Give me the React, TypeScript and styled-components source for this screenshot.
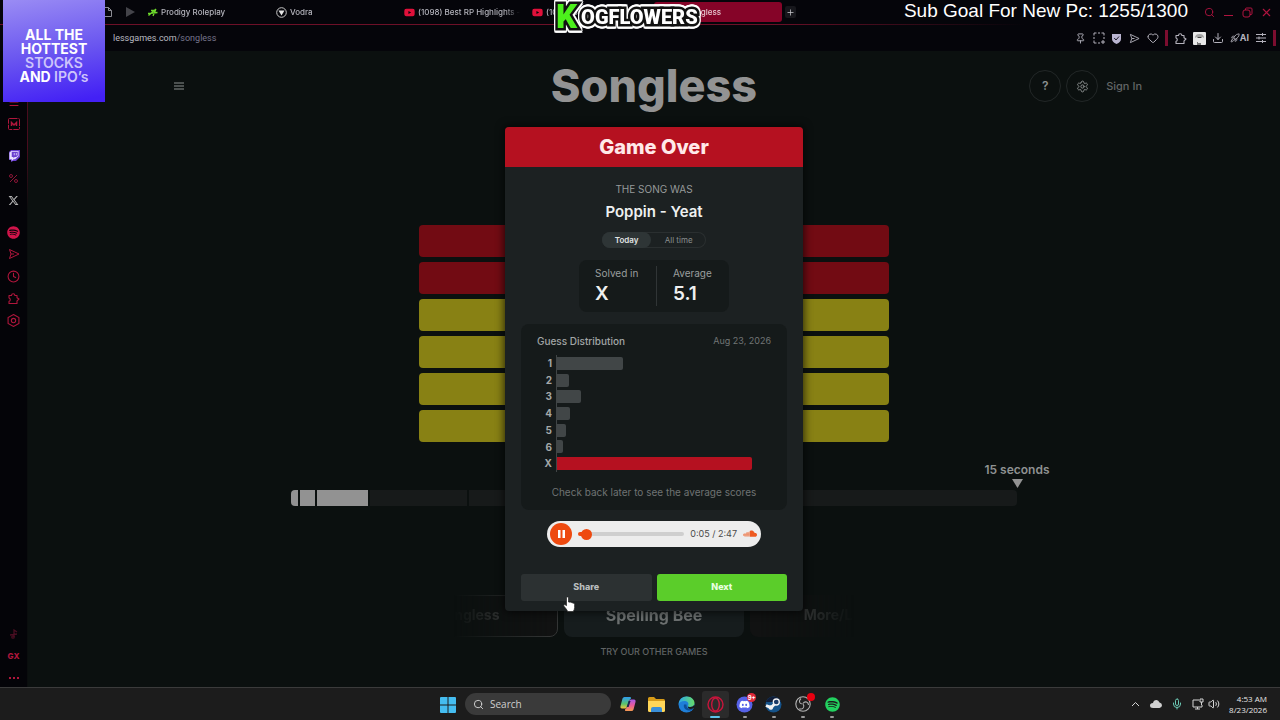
import React from "react";
import styled, { createGlobalStyle, css } from "styled-components";
import {
  Clock, Download, Heart, Menu, Mic, Pin, Plus, Rocket, Search,
  Settings, Volume2, X,
} from "lucide-react";
import { FaDiscord, FaSoundcloud, FaSpotify, FaTwitch, FaXTwitter, FaYoutube } from "react-icons/fa6";

const display = `Inter, "Liberation Sans", sans-serif`;
const RED = "#b51120";

const Global = createGlobalStyle`
  *, *::before, *::after { box-sizing: border-box; }
  body { margin: 0; background: #0b100f; font-family: ${display}; color: #d8dada; }
  button, input { font-family: inherit; }
  button { border: 0; padding: 0; background: none; color: inherit; cursor: pointer; }
  h1, h2, p { margin: 0; }
  a { color: inherit; text-decoration: none; }
  svg { display: block; flex: none; }
`;

const Page = styled.div`
  position: relative;
  display: flex;
  flex-direction: column;
  min-height: 100vh;
  overflow: hidden;
`;

/* ---------- browser chrome ---------- */

const TabBar = styled.div`
  display: flex;
  align-items: center;
  height: 25px;
  padding-left: 102px;
  background: #05050a;
  border-bottom: 1px solid;
  border-image: linear-gradient(90deg, #6d1028 0 60%, #05050a 80%) 1;
`;

const PinnedTabs = styled.div`
  display: flex;
  align-items: center;
  gap: 14px;
  width: 40px;
  color: #8c8c94;
`;

const Tab = styled.button<{ $active?: boolean }>`
  display: flex;
  align-items: center;
  gap: 3px;
  width: 128px;
  height: 20px;
  padding: 0 6px;
  overflow: hidden;
  border-radius: 3px;
  font-size: 8px;
  line-height: 12px;
  font-weight: 500;
  white-space: nowrap;
  color: ${(p) => (p.$active ? "#e8c8d0" : "#b4b4bc")};
  background: ${(p) => (p.$active ? "#850428" : "transparent")};
  ${(p) => p.$active && css`padding-left: 32px;`}
`;

const TabTitle = styled.span`
  overflow: hidden;
  flex: 1;
  text-align: left;
  mask-image: linear-gradient(90deg, #000 85%, transparent);
`;

const NewTab = styled.button`
  display: grid;
  place-items: center;
  width: 11px;
  height: 12px;
  margin-left: 3px;
  border-radius: 2px;
  background: #17171c;
  color: #c8c8cc;
`;

const WindowButtons = styled.div`
  display: flex;
  align-items: center;
  gap: 7px;
  margin-left: auto;
  padding-right: 7px;
  color: #b0143f;
`;

const IconButton = styled.button`
  display: grid;
  place-items: center;
  min-width: 12px;
  height: 14px;
`;

const AddressBar = styled.div`
  display: flex;
  align-items: center;
  justify-content: space-between;
  height: 26px;
  padding: 0 4px 0 113px;
  background: #05050a;
`;

const Url = styled.a`
  font: 400 9px/14px Roboto, sans-serif;
  color: #b9b9c0;
  span { color: #77758c; }
`;

const Tools = styled.div`
  display: flex;
  align-items: center;
  gap: 6px;
  color: #b4b2bc;
`;

const Divider = styled.i`
  width: 3px;
  height: 16px;
  background: #7c0d2f;
`;

const AiButton = styled(IconButton)`
  display: flex;
  align-items: center;
  font-size: 9px;
  line-height: 12px;
  font-weight: 700;
`;

const Window = styled.div`
  display: flex;
  flex: 1;
`;

const Sidebar = styled.nav`
  display: flex;
  flex-direction: column;
  justify-content: space-between;
  width: 28px;
  padding-top: 42px;
  background: #040408;
  border-right: 1px solid;
  border-image: linear-gradient(180deg, #4a0c1e 0 15%, #0a0d0d 25%) 1;
  color: #b0163c;
`;

const SideGroups = styled.div`
  display: flex;
  flex-direction: column;
  gap: 14px;
`;

const SideGroup = styled.div`
  display: flex;
  flex-direction: column;
  gap: 4px;
`;

const SideButton = styled.button<{ $color?: string }>`
  display: grid;
  place-items: center;
  width: 27px;
  height: 18px;
  font-size: 8px;
  line-height: 10px;
  font-weight: 800;
  color: ${(p) => p.$color ?? "inherit"};
`;

/* ---------- game page ---------- */

const Content = styled.main`
  position: relative;
  display: flex;
  flex: 1;
  flex-direction: column;
  align-items: center;
  padding-bottom: 24px;
  background: #0b100f;
`;

const Header = styled.header`
  display: grid;
  grid-template-columns: 1fr auto 1fr;
  align-items: center;
  width: min(100%, 976px);
  height: 70px;
  color: #7c8080;
`;

const MenuButton = styled.button`
  justify-self: start;
  padding: 8px;
`;

const Title = styled.h1`
  font-size: 45px;
  line-height: 56px;
  font-weight: 800;
  color: #939393;
`;

const HeaderActions = styled.div`
  display: flex;
  align-items: center;
  justify-self: end;
  gap: 5px;
`;

const RoundButton = styled.button`
  display: grid;
  place-items: center;
  width: 32px;
  height: 32px;
  border: 1px solid #222727;
  border-radius: 50%;
  font-size: 12px;
  line-height: 16px;
  font-weight: 600;
  color: #8c9090;
`;

const SignIn = styled.a`
  margin-left: 3px;
  font-size: 11px;
  line-height: 16px;
  font-weight: 500;
  color: #626666;
`;

const Board = styled.div`
  display: grid;
  gap: 5px;
  width: min(100%, 470px);
  margin-top: 104px;
`;

const Guess = styled.div<{ $kind: "wrong" | "artist" }>`
  height: 32px;
  border-radius: 4px;
  background: ${(p) => (p.$kind === "wrong" ? "#720b13" : "#888114")};
`;

const Timeline = styled.div`
  width: min(100%, 726px);
  margin-top: 20px;
`;

const Marker = styled.div`
  display: flex;
  flex-direction: column;
  align-items: center;
  gap: 1px;
  width: 80px;
  margin: 0 -40px 2px auto;
  font-size: 12px;
  line-height: 16px;
  font-weight: 600;
  color: #8f9292;
`;

const Segments = styled.div`
  display: flex;
  gap: 2px;
  height: 16px;
  overflow: hidden;
  border-radius: 4px;
`;

const Segment = styled.i<{ $span: number; $played: boolean }>`
  flex: ${(p) => p.$span} 1 0;
  background: ${(p) => (p.$played ? "#929292" : "#171a1a")};
`;

const Games = styled.div`
  display: flex;
  justify-content: center;
  gap: 6px;
  width: min(100%, 400px);
  margin-top: 89px;
  overflow: hidden;
  mask-image: linear-gradient(90deg, transparent, #000 24%, #000 76%, transparent);
`;

const GameCard = styled.a<{ $tone: "outline" | "main" | "plain" }>`
  display: grid;
  flex: none;
  justify-content: center;
  width: 180px;
  height: 42px;
  padding-top: 9px;
  border-radius: 8px;
  font-weight: 700;
  font-size: ${(p) => (p.$tone === "main" ? 16 : 14)}px;
  line-height: 20px;
  color: ${(p) => (p.$tone === "main" ? "#6c7070" : "#505050")};
  background: ${(p) => (p.$tone === "main" ? "#161c1d" : "#111212")};
  border: 1px solid ${(p) => (p.$tone === "outline" ? "#333535" : "transparent")};
`;

const Caption = styled.p`
  margin-top: 8px;
  font-size: 9px;
  line-height: 13px;
  font-weight: 500;
  color: #606464;
`;

/* ---------- result dialog ---------- */

const Layer = styled.div`
  position: absolute;
  inset: 0;
  display: flex;
  align-items: flex-start;
  justify-content: center;
  padding-top: 76px;
`;

const Dialog = styled.section`
  width: 298px;
  overflow: hidden;
  border-radius: 4px;
  background: #1c2122;
  box-shadow: 0 0 8px 1px #000000b0;
`;

const DialogTitle = styled.h2`
  background: ${RED};
  color: #ffe9e9;
  font-size: 20px;
  line-height: 40px;
  font-weight: 800;
  text-align: center;
`;

const DialogBody = styled.div`
  display: flex;
  flex-direction: column;
  align-items: center;
  padding: 14px 16px 10px;
`;

const Eyebrow = styled.p`
  font-size: 10px;
  line-height: 16px;
  color: #969a9a;
`;

const Song = styled.p`
  margin: 5px 0 10px;
  font-size: 15px;
  line-height: 20px;
  font-weight: 600;
  color: #eef0f0;
`;

const Switch = styled.div`
  display: flex;
  width: 104px;
  height: 16px;
  border-radius: 8px;
  box-shadow: inset 0 0 0 1px #2a2f30;
`;

const SwitchOption = styled.button<{ $on?: boolean }>`
  flex: ${(p) => (p.$on ? 9 : 10)};
  border-radius: 8px;
  font-size: 8px;
  line-height: 16px;
  font-weight: ${(p) => (p.$on ? 600 : 400)};
  color: ${(p) => (p.$on ? "#e2e5e5" : "#8a8e8e")};
  background: ${(p) => (p.$on ? "#2e3536" : "transparent")};
`;

const Stats = styled.div`
  display: flex;
  margin-top: 12px;
  padding: 6px 0;
  border-radius: 8px;
  background: #151a1a;
`;

const Stat = styled.div`
  width: 77px;
  padding-left: 16px;
  font-size: 10px;
  line-height: 15px;
  color: #9a9e9e;
  & + & { width: 73px; border-left: 1px solid #303536; }
  strong {
    display: block;
    font-size: 19px;
    line-height: 25px;
    font-weight: 600;
    color: #eef0f0;
  }
`;

const Distribution = styled.div`
  width: 100%;
  margin-top: 12px;
  padding: 9px 16px 10px;
  border-radius: 8px;
  background: #151a1a;
`;

const DistHead = styled.div`
  display: flex;
  align-items: center;
  justify-content: space-between;
  margin-bottom: 6px;
  font-size: 10px;
  line-height: 16px;
  font-weight: 500;
  color: #a2a6a6;
  time { font-size: 9px; font-weight: 400; color: #717575; }
`;

const Chart = styled.div`
  display: flex;
  flex-direction: column;
  height: 117px;
`;

const ChartRow = styled.div`
  display: flex;
  flex: 1;
  align-items: stretch;
  font-size: 10px;
  line-height: 16px;
  font-weight: 700;
  color: #a4a8a8;
`;

const ChartLabel = styled.span`
  width: 20px;
  padding-right: 4px;
  text-align: right;
  border-right: 1px solid #404546;
`;

const Bar = styled.i<{ $hit?: boolean }>`
  align-self: center;
  height: 13px;
  border-radius: 0 2px 2px 0;
  background: ${(p) => (p.$hit ? RED : "#414647")};
`;

const DistNote = styled.p`
  margin-top: 12px;
  font-size: 10px;
  line-height: 16px;
  text-align: center;
  white-space: nowrap;
  color: #6f7373;
`;

const Player = styled.div`
  display: flex;
  align-items: center;
  gap: 6px;
  width: 214px;
  height: 26px;
  margin-top: 11px;
  padding: 0 4px 0 3px;
  border-radius: 13px;
  background: #ededed;
  font-size: 9px;
  line-height: 12px;
  color: #4a4a4a;
`;

const PauseButton = styled.button`
  display: grid;
  place-items: center;
  width: 22px;
  height: 22px;
  border-radius: 50%;
  background: #ee4a10;
`;

const Seek = styled.input`
  appearance: none;
  flex: 1;
  min-width: 0;
  height: 4px;
  margin: 0;
  border-radius: 2px;
  background: linear-gradient(90deg, #ee4a10 8%, #cfcfcf 8%);
  &::-webkit-slider-thumb {
    appearance: none;
    width: 11px;
    height: 11px;
    border-radius: 50%;
    background: #ee4a10;
  }
`;

const Actions = styled.div`
  display: flex;
  gap: 5px;
  width: 100%;
  margin-top: 27px;
`;

const ActionButton = styled.button<{ $primary?: boolean }>`
  flex: 1;
  height: 27px;
  padding-bottom: 1px;
  border-radius: 3px;
  font-size: 9px;
  line-height: 12px;
  font-weight: 800;
  color: ${(p) => (p.$primary ? "#e8ffe0" : "#b9bdbd")};
  background: ${(p) => (p.$primary ? "#5bcd2a" : "#2c3132")};
`;

/* ---------- taskbar ---------- */

const Taskbar = styled.footer`
  display: grid;
  grid-template-columns: 1fr auto 1fr;
  align-items: center;
  height: 33px;
  padding: 0 13px 0 19px;
  background: #1c1c1c;
  border-top: 1px solid #3b3b3b;
`;

const Dock = styled.div`
  display: flex;
  grid-column: 2;
  align-items: center;
`;

const SearchBox = styled.label`
  display: flex;
  align-items: center;
  gap: 6px;
  width: 146px;
  height: 22px;
  margin: 0 3px 0 9px;
  padding: 0 8px;
  border-radius: 11px;
  background: #3a3a3a;
  color: #d8d8d8;
  input {
    min-width: 0;
    flex: 1;
    padding: 0;
    border: 0;
    outline: 0;
    background: none;
    font: 400 10px/14px "Open Sans", sans-serif;
  }
  input::placeholder { color: #cfcfcf; }
`;

const Apps = styled.div`
  display: flex;
  justify-content: space-between;
  width: 232px;
`;

const AppButton = styled.button<{ $state?: "open" | "active" }>`
  position: relative;
  display: grid;
  place-items: center;
  width: 27px;
  height: 27px;
  border-radius: 3px;
  background: ${(p) => (p.$state === "active" ? "#2b2b2b" : "transparent")};
  ${(p) => p.$state && css`
    &::after {
      content: "";
      position: absolute;
      bottom: 0;
      width: ${p.$state === "active" ? 10 : 4}px;
      height: 2px;
      border-radius: 1px;
      background: ${p.$state === "active" ? "#5cc3ea" : "#9a9a9a"};
    }
  `}
`;

const Badge = styled.span`
  position: absolute;
  top: 2px;
  right: 2px;
  min-width: 9px;
  height: 9px;
  border-radius: 5px;
  background: #e0283a;
  font-size: 6px;
  line-height: 9px;
  font-weight: 700;
  color: #fff;
`;

const Dot = styled(Badge)`
  min-width: 8px;
  height: 8px;
  background: #e80010;
`;

const Tray = styled.div`
  display: flex;
  align-items: center;
  justify-self: end;
  color: #d4d4d4;
`;

const TrayIcons = styled.div`
  display: flex;
  gap: 9px;
  margin-right: 9px;
`;

const TrayPair = styled.div`
  display: flex;
  gap: 4px;
`;

const ClockText = styled.time`
  font: 400 8px/11px "Open Sans", sans-serif;
  text-align: right;
  color: #e6e6e6;
`;

/* ---------- stream overlays ---------- */

const Ad = styled.aside`
  position: absolute;
  top: 0;
  left: 3px;
  width: 102px;
  height: 102px;
  padding-top: 28px;
  background: linear-gradient(170deg, #9a8cf4 0%, #6b57f0 50%, #4320f5 95%);
  font-size: 14px;
  line-height: 14px;
  font-weight: 700;
  text-align: center;
  white-space: nowrap;
  color: #fff;
  span { color: #cdc5fb; font-weight: 600; }
`;

const StreamLogo = styled.div`
  position: absolute;
  top: 2px;
  left: 556px;
  display: flex;
  align-items: center;
  height: 30px;
  font: 900 20px/30px Roboto, sans-serif;
  color: #fff;
  -webkit-text-stroke: 5px #111;
  paint-order: stroke fill;
  filter: drop-shadow(1px 0 #fff) drop-shadow(-1px 0 #fff) drop-shadow(0 2px #fff) drop-shadow(0 -2px #fff);
  b {
    margin-right: 4px;
    font-size: 33px;
    color: #4cf01c;
  }
`;

const SubGoal = styled.div`
  position: absolute;
  top: 0;
  right: 92px;
  font: 400 19px/21px "Liberation Sans", sans-serif;
  color: #fff;
`;

const Cursor = styled.svg`
  position: absolute;
  top: 596px;
  left: 563px;
`;

/* ---------- drawings ---------- */

const Opera = () => (
  <svg width="17" height="17" viewBox="0 0 17 17" fill="none" stroke="#c8153c" strokeWidth="1.4">
    <circle cx="8.500" cy="8.500" r="7.500" />
    <ellipse cx="8.500" cy="8.500" rx="3.800" ry="6.500" />
  </svg>
);

const Windows = () => (
  <svg width="16" height="16" viewBox="0 0 16 16" fill="#45bdf0">
    <path d="M0 1q0-1 1-1h6.500v7.500H0zM8.500 0H15q1 0 1 1v6.500H8.500zM0 8.500h7.500V16H1q-1 0-1-1zM8.500 8.500H16V15q0 1-1 1H8.500z" />
  </svg>
);

const Copilot = () => (
  <svg width="16" height="16" viewBox="0 0 16 16">
    <defs>
      <linearGradient id="cpa" x1="0" y1="0" x2="0" y2="1"><stop stopColor="#2f9df0" /><stop offset=".6" stopColor="#5ac46b" /><stop offset="1" stopColor="#f3c53c" /></linearGradient>
      <linearGradient id="cpb" x1="0" y1="0" x2="0" y2="1"><stop stopColor="#a55be8" /><stop offset=".5" stopColor="#ea5a9b" /><stop offset="1" stopColor="#f59a50" /></linearGradient>
    </defs>
    <path fill="url(#cpa)" d="M4.500 1H10q1.500 0 1 1.500L9 4.500 7 11q-.5 1.500-2 1.500H2Q0 12.500.5 10l2-7.500Q3 1 4.500 1z" />
    <path fill="url(#cpb)" d="M11 3.500h3q2 0 1.500 2.500l-2 7.500q-.5 1.500-2 1.500H6q-1.500 0-1-1.500l2-2 2-6.500q.5-1.500 2-1.500z" />
    <path fill="#1c2a50" d="M8.600 5h2l-2 6h-2z" />
  </svg>
);

const Folder = () => (
  <svg width="17" height="15" viewBox="0 0 17 15">
    <path fill="#d79b18" d="M0 1.500Q0 0 1.500 0H6l2 2h7.500Q17 2 17 3.500V8H0z" />
    <path fill="#ffd658" d="M0 4h17v9.500q0 1.500-1.500 1.500h-14Q0 15 0 13.500z" />
    <path fill="#3a8fd8" d="M3 15v-3q0-2 2-2h7q2 0 2 2v3z" />
  </svg>
);

const Edge = () => (
  <svg width="17" height="17" viewBox="0 0 17 17">
    <defs>
      <linearGradient id="ega" x1="0" y1="0" x2="1" y2="0"><stop stopColor="#2aa7e8" /><stop offset="1" stopColor="#68dc6a" /></linearGradient>
    </defs>
    <circle cx="8.500" cy="8.500" r="8" fill="#1f7fd8" />
    <path fill="url(#ega)" d="M.6 8C1 3.500 4.500.5 8.700.5c5 0 7.800 3.500 7.800 6.500 0 2.500-2 4-4.300 4-1.700 0-2.600-.6-2.200-1.300C11.500 7 9 5 6.300 5 3.500 5 1.200 6.500.6 8z" />
    <path fill="#0d4f98" d="M6 8.500C5 12 8 15 12.500 14.500 14 14 15 13 15.500 12c-4 2-7.500.5-7-3.500z" />
    <path fill="#1c1c1c" d="M10 9.700c-.4.700.5 1.300 2.200 1.300 1.700 0 3.200-.8 3.900-2l.9 1.500-1.500 1.800c-3.500 1.500-6.500.2-5.500-2.600z" />
  </svg>
);

const Steam = () => (
  <svg width="17" height="17" viewBox="0 0 17 17">
    <circle cx="8.500" cy="8.500" r="8" fill="#15538a" />
    <path fill="#101d38" d="M.9 6A8 8 0 0 1 16 6z" />
    <path d="M1 9.500l5 2.200 5-5.200" stroke="#f2f2f2" strokeWidth="3" fill="none" />
    <circle cx="11.300" cy="6" r="3" fill="#1a3a66" stroke="#f2f2f2" strokeWidth="1.300" />
    <circle cx="5.800" cy="11.500" r="2.300" fill="#f2f2f2" />
  </svg>
);

const Obs = () => (
  <svg width="16" height="16" viewBox="0 0 16 16" fill="none" stroke="#b4b4b4" strokeWidth="1.100">
    <circle cx="8" cy="8" r="7.200" fill="#202020" />
    <path d="M7.500 8C4 8 3.500 4.500 6 2.500M8 7.500c2-3 5.500-1.500 5.500 1.500M8.300 8.200c1.800 3-.8 5.600-4 4.600" />
  </svg>
);

const Vodra = () => (
  <svg width="11" height="11" viewBox="0 0 11 11">
    <circle cx="5.500" cy="5.500" r="4.800" fill="none" stroke="#c8c8c8" />
    <path fill="#e6e6e6" d="M2.500 3.500h6l-3 5z" />
  </svg>
);

const Prodigy = () => (
  <svg width="10" height="9" viewBox="0 0 10 9" fill="none" stroke="#6ed82c" strokeWidth="1.300">
    <path d="M.5 7.500L8 1M5 8l3-7M0 5.500l9.500-1M3 2.500h5" />
  </svg>
);

const Avatar = () => (
  <svg width="13" height="13" viewBox="0 0 13 13">
    <rect width="13" height="13" rx="1" fill="#e8e8e8" />
    <path fill="#a4a4a4" d="M2 6q0-4 4.500-4T11 6L9 5H4z" />
    <path stroke="#444" d="M4.500 5.500h4" />
    <path fill="#777" d="M4 13v-3h1v1h3v2z" />
  </svg>
);

const Shield = () => (
  <svg width="11" height="11" viewBox="0 0 11 11">
    <path fill="#b9b4d0" d="M1 1h9v5q0 3-4.500 5Q1 9 1 6z" />
    <path d="M3.200 5l1.800 2 3-3.500" stroke="#1c1a28" fill="none" />
  </svg>
);

const Flow = ({ size }: { size: number }) => (
  <svg width={size} height={size} viewBox="0 0 12 12" fill="none" stroke="currentColor" strokeLinejoin="round">
    <path d="M1.500 1.500L11 6l-9.500 4.500L3 6zM3 6h3" />
  </svg>
);

const Extension = ({ size }: { size: number }) => (
  <svg width={size} height={size} viewBox="0 0 13 13" fill="none" stroke="currentColor" strokeWidth="1.100" strokeLinejoin="round">
    <path d="M2 3.500h2.500a1.700 1.700 0 0 1 3.400 0H10v2.300l2 1.200-2 1.800v2.700H2V9.300a1.700 1.700 0 0 0 0-3.300z" />
  </svg>
);

const Snapshot = () => (
  <svg width="12" height="12" viewBox="0 0 12 12" fill="none" stroke="currentColor">
    <path d="M1 3.500V1h2.500M5 1h2M8.500 1H11v2.500M11 5v2M1 5v2M1 8.500V11h2.500M5 11h2M10 8v4M8 10h4" />
  </svg>
);

const EasySetup = () => (
  <svg width="10" height="10" viewBox="0 0 10 10" fill="none" stroke="currentColor">
    <path d="M0 1.500h10M0 5h10M0 8.500h10M6.500 0v3M3 3.500v3M6.500 7v3" />
  </svg>
);

const Ethernet = () => (
  <svg width="12" height="12" viewBox="0 0 12 12" fill="none" stroke="currentColor">
    <path d="M7 2H1v7h9V7M3 11h5M5.500 9v2M9.500 4v3M8 1v3h3V1z" />
  </svg>
);

const tabs = [
  { title: "Prodigy Roleplay", icon: <Prodigy /> },
  { title: "Vodra", icon: <Vodra /> },
  { title: "(1098) Best RP Highlights - YouTube", icon: <FaYoutube size={11} color="#e0103a" /> },
  { title: "(1098) Best RP Highlights", icon: <FaYoutube size={11} color="#e0103a" /> },
];

const guesses = ["wrong", "wrong", "artist", "artist", "artist", "artist"] as const;
const segments = [7, 15, 51, 97, 220, 326];
const distribution = [
  { label: "1", size: 66 },
  { label: "2", size: 12 },
  { label: "3", size: 24 },
  { label: "4", size: 13 },
  { label: "5", size: 9 },
  { label: "6", size: 6 },
  { label: "X", size: 195 },
];

export default function App() {
  return (
    <Page>
      <Global />
      <TabBar>
        <PinnedTabs>
          <svg width="10" height="10" viewBox="0 0 10 10" fill="none" stroke="currentColor"><path d="M1 9.500V.5h5.500l3 3v6zM6.500.5v3h3" /></svg>
          <svg width="9" height="10" viewBox="0 0 9 10" fill="#44444a"><path d="M0 0l9 5-9 5z" /></svg>
        </PinnedTabs>
        {tabs.map((t, i) => (
          <Tab key={i}>{t.icon}<TabTitle>{t.title}</TabTitle></Tab>
        ))}
        <Tab $active><TabTitle>Songless</TabTitle></Tab>
        <NewTab aria-label="New tab"><Plus size={9} /></NewTab>
        <WindowButtons>
          <IconButton aria-label="Search tabs"><Search size={11} /></IconButton>
          <IconButton aria-label="Minimize"><svg width="9" height="10" viewBox="0 0 9 10"><path d="M0 8.500h9" stroke="currentColor" /></svg></IconButton>
          <IconButton aria-label="Restore">
            <svg width="11" height="11" viewBox="0 0 11 11" fill="none" stroke="currentColor"><rect x="1" y="3" width="7" height="7" rx="2" /><path d="M3.500 3V2Q3.500 1 4.500 1H9q1 0 1 1v4.500q0 1-1 1H8" /></svg>
          </IconButton>
          <IconButton aria-label="Close"><X size={13} /></IconButton>
        </WindowButtons>
      </TabBar>
      <AddressBar>
        <Url href="#songless">lessgames.com<span>/songless</span></Url>
        <Tools>
          <IconButton aria-label="Pin"><Pin size={11} /></IconButton>
          <IconButton aria-label="Snapshot"><Snapshot /></IconButton>
          <IconButton aria-label="Protection"><Shield /></IconButton>
          <IconButton aria-label="Flow"><Flow size={11} /></IconButton>
          <IconButton aria-label="Favorite"><Heart size={12} /></IconButton>
          <Divider />
          <IconButton aria-label="Extensions"><Extension size={13} /></IconButton>
          <IconButton aria-label="Profile"><Avatar /></IconButton>
          <IconButton aria-label="Downloads"><Download size={12} /></IconButton>
          <AiButton><Rocket size={10} />AI</AiButton>
          <IconButton aria-label="Easy setup"><EasySetup /></IconButton>
          <Divider />
        </Tools>
      </AddressBar>

      <Window>
        <Sidebar aria-label="Browser sidebar">
          <SideGroups>
            <SideGroup>
              <SideButton aria-label="GX Corner"><Menu size={12} /></SideButton>
              <SideButton aria-label="Mods">
                <svg width="12" height="12" viewBox="0 0 12 12" fill="none" stroke="currentColor"><rect x=".5" y=".5" width="11" height="11" rx="1" strokeDasharray="8 1" /><path d="M3.500 8V4.500L6 7l2.500-2.500V8" strokeWidth="1.500" /></svg>
              </SideButton>
            </SideGroup>
            <SideGroup>
              <SideButton aria-label="Twitch">
                <svg width="12" height="12" viewBox="0 0 12 12">
                  <path fill="#6a3fd0" d="M1 2l2-2h9v7l-4 4H5l-2 1v-2H1z" />
                  <FaTwitch x={1} y={1} size={10} color="#e8e0ff" />
                </svg>
              </SideButton>
              <SideButton $color="#8a1636" aria-label="Offers">
                <svg width="9" height="9" viewBox="0 0 9 9" fill="none" stroke="currentColor"><circle cx="2" cy="2" r="1.500" /><circle cx="7" cy="7" r="1.500" /><path d="M8 1L1 8" /></svg>
              </SideButton>
              <SideButton $color="#b4b4b4" aria-label="X"><FaXTwitter size={11} /></SideButton>
            </SideGroup>
            <SideGroup>
              <SideButton $color="#d0144a" aria-label="Player"><FaSpotify size={13} /></SideButton>
              <SideButton aria-label="Flow"><Flow size={12} /></SideButton>
              <SideButton aria-label="History"><Clock size={13} /></SideButton>
              <SideButton aria-label="Extensions"><Extension size={13} /></SideButton>
              <SideButton aria-label="Settings">
                <svg width="13" height="13" viewBox="0 0 24 24" fill="none" stroke="currentColor" strokeWidth="2"><path d="M12 1l10 5.500v11L12 23 2 17.500v-11z" /><circle cx="12" cy="12" r="4" /></svg>
              </SideButton>
            </SideGroup>
          </SideGroups>
          <SideGroup>
            <SideButton $color="#4a0e22" aria-label="Sounds">
              <svg width="10" height="10" viewBox="0 0 10 10" fill="none" stroke="currentColor" strokeWidth="1.300"><path d="M5 8V1l3 2M1 6l7-1" /><circle cx="4" cy="8" r="1.200" /></svg>
            </SideButton>
            <SideButton>GX</SideButton>
            <SideButton aria-label="More">
              <svg width="10" height="2" viewBox="0 0 10 2" fill="currentColor"><path d="M0 0h2v2H0zM4 0h2v2H4zM8 0h2v2H8z" /></svg>
            </SideButton>
          </SideGroup>
        </Sidebar>

        <Content>
          <Header>
            <MenuButton aria-label="Menu">
              <svg width="10" height="8" viewBox="0 0 10 8" stroke="#8c9090"><path d="M0 1h10M0 4h10M0 7h10" /></svg>
            </MenuButton>
            <Title>Songless</Title>
            <HeaderActions>
              <RoundButton aria-label="Help">?</RoundButton>
              <RoundButton aria-label="Settings"><Settings size={13} strokeWidth={1.8} /></RoundButton>
              <SignIn href="#signin">Sign In</SignIn>
            </HeaderActions>
          </Header>
          <Board>
            {guesses.map((kind, i) => <Guess key={i} $kind={kind} />)}
          </Board>
          <Timeline>
            <Marker>
              15 seconds
              <svg width="11" height="9" viewBox="0 0 11 9" fill="#929292"><path d="M0 0h11l-5.500 9z" /></svg>
            </Marker>
            <Segments>
              {segments.map((s, i) => <Segment key={s} $span={s} $played={i < 3} />)}
            </Segments>
          </Timeline>
          <Games>
            <GameCard href="#songless" $tone="outline">Songless</GameCard>
            <GameCard href="#spelling" $tone="main">Spelling Bee</GameCard>
            <GameCard href="#moreless" $tone="plain">More/Less</GameCard>
          </Games>
          <Caption>TRY OUR OTHER GAMES</Caption>

          <Layer>
            <Dialog role="dialog" aria-labelledby="result-title">
              <DialogTitle id="result-title">Game Over</DialogTitle>
              <DialogBody>
                <Eyebrow>THE SONG WAS</Eyebrow>
                <Song>Poppin - Yeat</Song>
                <Switch>
                  <SwitchOption $on>Today</SwitchOption>
                  <SwitchOption>All time</SwitchOption>
                </Switch>
                <Stats>
                  <Stat>Solved in<strong>X</strong></Stat>
                  <Stat>Average<strong>5.1</strong></Stat>
                </Stats>
                <Distribution>
                  <DistHead>Guess Distribution<time>Aug 23, 2026</time></DistHead>
                  <Chart>
                    {distribution.map((d) => (
                      <ChartRow key={d.label}>
                        <ChartLabel>{d.label}</ChartLabel>
                        <Bar $hit={d.label === "X"} style={{ width: d.size }} />
                      </ChartRow>
                    ))}
                  </Chart>
                  <DistNote>Check back later to see the average scores</DistNote>
                </Distribution>
                <Player>
                  <PauseButton aria-label="Pause">
                    <svg width="7" height="8" viewBox="0 0 7 8" fill="#fff"><path d="M0 0h2.500v8H0zM4.500 0H7v8H4.500z" /></svg>
                  </PauseButton>
                  <Seek type="range" aria-label="Seek" min={0} max={167} defaultValue={5} />
                  <span>0:05 / 2:47</span>
                  <FaSoundcloud size={14} color="#ee5a20" />
                </Player>
                <Actions>
                  <ActionButton>Share</ActionButton>
                  <ActionButton $primary>Next</ActionButton>
                </Actions>
              </DialogBody>
            </Dialog>
          </Layer>
        </Content>
      </Window>

      <Taskbar>
        <Dock>
          <IconButton aria-label="Start"><Windows /></IconButton>
          <SearchBox>
            <Search size={11} />
            <input type="search" aria-label="Search" placeholder="Search" />
          </SearchBox>
          <Apps>
            <AppButton aria-label="Copilot"><Copilot /></AppButton>
            <AppButton aria-label="File Explorer"><Folder /></AppButton>
            <AppButton aria-label="Edge"><Edge /></AppButton>
            <AppButton aria-label="Opera GX" $state="active"><Opera /></AppButton>
            <AppButton aria-label="Discord" $state="open">
              <svg width="17" height="17" viewBox="0 0 17 17"><circle cx="8.500" cy="8.500" r="8" fill="#5662e8" /><FaDiscord x={3} y={3} size={11} color="#fff" /></svg>
              <Badge>9+</Badge>
            </AppButton>
            <AppButton aria-label="Steam" $state="open"><Steam /></AppButton>
            <AppButton aria-label="OBS" $state="open"><Obs /><Dot /></AppButton>
            <AppButton aria-label="Spotify" $state="open"><FaSpotify size={15} color="#22d15f" /></AppButton>
          </Apps>
        </Dock>
        <Tray>
          <TrayIcons>
            <svg width="11" height="12" viewBox="0 0 11 12" fill="none" stroke="currentColor"><path d="M2 8l3.500-3.500L9 8" /></svg>
            <svg width="12" height="12" viewBox="0 0 12 12" fill="#d0d0d0"><path d="M3 10Q0 10 0 7.500T3 5q.5-3 3.500-3 2 0 3 2.500Q12 5 12 7.300T9.500 10z" /></svg>
            <Mic size={12} color="#6cc8b4" />
            <TrayPair><Ethernet /><Volume2 size={12} /></TrayPair>
          </TrayIcons>
          <ClockText>4:53 AM<br />8/23/2026</ClockText>
        </Tray>
      </Taskbar>

      <Ad>ALL THE<br />HOTTEST<br /><span>STOCKS</span><br />AND <span>IPO’s</span></Ad>
      <StreamLogo><b>K</b>OGFLOWERS</StreamLogo>
      <SubGoal>Sub Goal For New Pc: 1255/1300</SubGoal>
      <Cursor width="13" height="16" viewBox="0 0 13 16">
        <path fill="#fff" stroke="#222" strokeWidth=".7" d="M3.500 1.500Q4.500.3 5.500 1.500V6l1 .2q.8-.6 1.600.4.900-.5 1.600.4 1.800-.3 1.900 1.500v3q0 2-1.500 4H4.800Q3.500 13 .8 10q-.5-1.500 1-1.500l1.700 1.200z" />
      </Cursor>
    </Page>
  );
}
